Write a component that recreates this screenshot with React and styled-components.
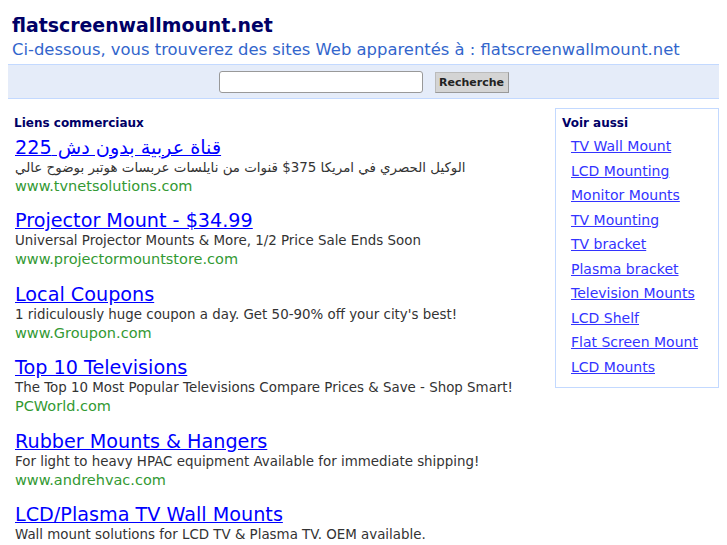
import { createGlobalStyle, styled } from "styled-components";

const GlobalStyle = createGlobalStyle`
  body {
    margin: 8px;
    background: #fff;
    font-family: "DejaVu Sans", Verdana, sans-serif;
  }
`;

const ads = [
  {
    title: "قناة عربية بدون دش 225",
    desc: "الوكيل الحصري في امريكا 375$ قنوات من نايلسات عربسات هوتبر بوضوح عالي",
    url: "www.tvnetsolutions.com",
    rtl: true,
  },
  {
    title: "Projector Mount - $34.99",
    desc: "Universal Projector Mounts & More, 1/2 Price Sale Ends Soon",
    url: "www.projectormountstore.com",
  },
  {
    title: "Local Coupons",
    desc: "1 ridiculously huge coupon a day. Get 50-90% off your city's best!",
    url: "www.Groupon.com",
  },
  {
    title: "Top 10 Televisions",
    desc: "The Top 10 Most Popular Televisions Compare Prices & Save - Shop Smart!",
    url: "PCWorld.com",
  },
  {
    title: "Rubber Mounts & Hangers",
    desc: "For light to heavy HPAC equipment Available for immediate shipping!",
    url: "www.andrehvac.com",
  },
  {
    title: "LCD/Plasma TV Wall Mounts",
    desc: "Wall mount solutions for LCD TV & Plasma TV. OEM available.",
    url: "",
  },
];

const related = [
  "TV Wall Mount",
  "LCD Mounting",
  "Monitor Mounts",
  "TV Mounting",
  "TV bracket",
  "Plasma bracket",
  "Television Mounts",
  "LCD Shelf",
  "Flat Screen Mount",
  "LCD Mounts",
];

export default function App() {
  return (
    <>
      <GlobalStyle />
      <Header>
        <SiteTitle>flatscreenwallmount.net</SiteTitle>
        <SubTitle>
          Ci-dessous, vous trouverez des sites Web apparentés à : flatscreenwallmount.net
        </SubTitle>
      </Header>
      <SearchBar>
        <SearchInput type="text" />
        <SearchButton>Recherche</SearchButton>
      </SearchBar>
      <Content>
        <Main>
          <SectionLabel>Liens commerciaux</SectionLabel>
          {ads.map((ad) => (
            <Ad key={ad.title}>
              <AdTitle href="#">
                {ad.rtl ? <bdi dir="rtl">{ad.title}</bdi> : ad.title}
              </AdTitle>
              <AdDesc>{ad.rtl ? <bdi dir="rtl">{ad.desc}</bdi> : ad.desc}</AdDesc>
              {ad.url && <AdUrl>{ad.url}</AdUrl>}
            </Ad>
          ))}
        </Main>
        <Sidebar>
          <SideLabel>Voir aussi</SideLabel>
          <SideList>
            {related.map((r) => (
              <li key={r}>
                <SideLink href="#">{r}</SideLink>
              </li>
            ))}
          </SideList>
        </Sidebar>
      </Content>
    </>
  );
}

const Header = styled.div`
  padding: 5px 4px 0 4px;
`;

const SiteTitle = styled.h1`
  margin: 0;
  font-size: 18.9px;
  line-height: 24px;
  font-weight: bold;
  color: #000066;
`;

const SubTitle = styled.div`
  margin-top: 1px;
  font-size: 16.4px;
  line-height: 24px;
  color: #3366cc;
`;

const SearchBar = styled.div`
  margin-top: 2px;
  height: 33px;
  background: #e5ecf9;
  border-top: 1px solid #c3d9ff;
  border-bottom: 1px solid #c3d9ff;
  display: flex;
  align-items: center;
  justify-content: center;
  gap: 12px;
`;

const SearchInput = styled.input`
  box-sizing: border-box;
  width: 204px;
  height: 22px;
  border: 1px solid #999;
  border-radius: 3px;
  background: #fff;
  padding: 0 4px;
`;

const SearchButton = styled.button`
  box-sizing: border-box;
  width: 74px;
  height: 21px;
  margin-top: 1px;
  background: #d4d4d4;
  border: 1px solid #bbb;
  border-bottom-color: #999;
  border-right-color: #999;
  font-family: "DejaVu Sans", sans-serif;
  font-size: 11px;
  font-weight: bold;
  color: #222;
  padding: 0;
`;

const Content = styled.div`
  display: flex;
  justify-content: space-between;
  align-items: flex-start;
  margin-top: 9px;
`;

const Main = styled.div`
  padding: 8px 0 0 6px;
`;

const SectionLabel = styled.div`
  font-size: 12px;
  line-height: 15px;
  font-weight: bold;
  color: #000066;
  margin-bottom: 5.5px;
`;

const Ad = styled.div`
  margin-bottom: 15.6px;
`;

const AdTitle = styled.a`
  display: block;
  font-size: 19.2px;
  line-height: 22px;
  color: #0000ff;
  text-decoration: underline;
  padding-left: 1px;
`;

const AdDesc = styled.div`
  font-size: 13.4px;
  line-height: 18px;
  color: #333;
  padding-left: 1px;
`;

const AdUrl = styled.div`
  font-size: 14.5px;
  line-height: 18px;
  color: #339933;
  padding-left: 1px;
`;

const Sidebar = styled.div`
  box-sizing: border-box;
  width: 164px;
  border: 1px solid #c3d9ff;
  padding: 6px 6px 8px 6px;
`;

const SideLabel = styled.div`
  font-size: 12px;
  line-height: 16px;
  font-weight: bold;
  color: #000066;
  margin-bottom: 3px;
`;

const SideList = styled.ul`
  list-style: none;
  margin: 0;
  padding: 0 0 0 9px;
  li {
    font-size: 14px;
    line-height: 24.5px;
  }
`;

const SideLink = styled.a`
  color: #3333ff;
  text-decoration: underline;
`;
